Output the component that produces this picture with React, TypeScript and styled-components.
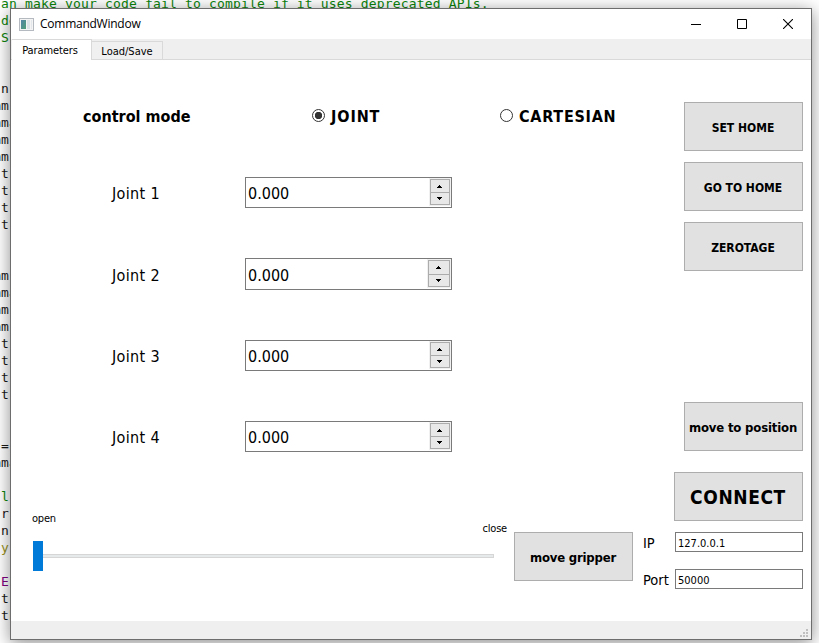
import React from 'react';
import styled, { createGlobalStyle } from 'styled-components';

const GlobalStyle = createGlobalStyle`
  * { box-sizing: border-box; }
  body { margin: 0; overflow: hidden; background: #fff; }
`;

const UI = '"DejaVu Sans Condensed", "DejaVu Sans", sans-serif';

const Desktop = styled.div`
  position: relative;
  width: 819px;
  height: 643px;
  overflow: hidden;
  background: #fff;
  font-family: ${UI};
  color: #000;
`;

const Code = styled.div`
  margin: -5px 0 0 -7px;
  font: 13px/17px "DejaVu Sans Mono", monospace;
  letter-spacing: 0.17px;
  white-space: pre;
`;

const CodeLine = styled.div<{ $color?: string }>`
  height: 17px;
  color: ${(p) => p.$color ?? '#1a1a1a'};
`;

const Window = styled.main`
  position: absolute;
  left: 10px;
  top: 8px;
  width: 802px;
  height: 632px;
  display: flex;
  flex-direction: column;
  background: #fff;
  border: 1px solid #6d6d6d;
  box-shadow: 0 3px 16px rgba(0, 0, 0, 0.45);
`;

const TitleBar = styled.header`
  display: flex;
  align-items: center;
  height: 30px;
  padding-left: 8px;
`;

const Title = styled.div`
  flex: 1;
  margin-left: 6px;
  font: 12px/16px "Open Sans", "Noto Sans", sans-serif;
  letter-spacing: -0.25px;
`;

const Caption = styled.button`
  display: flex;
  align-items: center;
  justify-content: center;
  width: 46px;
  height: 28px;
  padding: 0;
  border: 0;
  background: none;
`;

const TabBar = styled.nav`
  display: flex;
  align-items: flex-end;
  height: 21px;
  padding-left: 1px;
  background: #efefef;
  box-shadow: inset 0 -1px #d9d9d9;
`;

const Tab = styled.div<{ $active?: boolean; $width: number }>`
  width: ${(p) => p.$width}px;
  height: ${(p) => (p.$active ? 21 : 19)}px;
  padding-right: ${(p) => (p.$active ? 3 : 0)}px;
  border: 1px solid #d9d9d9;
  border-left-width: 0;
  border-bottom-width: ${(p) => (p.$active ? 0 : 1)}px;
  background: ${(p) => (p.$active ? '#fff' : '#f0f0f0')};
  text-align: center;
  font-size: 11px;
  line-height: ${(p) => (p.$active ? 21 : 19)}px;
  letter-spacing: ${(p) => (p.$active ? -0.1 : 0)}px;
  white-space: nowrap;
`;

const Panel = styled.section`
  display: grid;
  grid-template-columns: 632px 160px;
  height: 561px;
`;

const StatusBar = styled.footer`
  display: flex;
  justify-content: flex-end;
  align-items: flex-end;
  height: 18px;
  padding: 0 3px 2px 0;
  background: #efefef;
`;

const Form = styled.div`
  display: flex;
  flex-direction: column;
  padding-top: 42px;
`;

const ModeRow = styled.div`
  display: grid;
  grid-template-columns: 229px 188px 1fr;
  align-items: center;
  height: 27px;
  margin-bottom: 48px;
  padding-left: 72px;
  font-size: 16px;
  font-weight: bold;
  white-space: nowrap;
`;

const Radio = styled.label`
  display: flex;
  align-items: center;
  gap: 6px;
`;

const RadioMark = styled.span<{ $checked?: boolean }>`
  width: 13px;
  height: 13px;
  border: 1px solid #333;
  border-radius: 50%;
  background: ${(p) => (p.$checked ? 'radial-gradient(circle, #333 3.4px, #fff 4px)' : '#fff')};
`;

const Text = styled.span<{ $spacing?: number }>`
  padding-top: 2px;
  letter-spacing: ${(p) => p.$spacing ?? 0}px;
`;

const JointList = styled.div`
  display: flex;
  flex-direction: column;
  gap: 50px;
`;

const JointRow = styled.div<{ $height: number }>`
  display: grid;
  grid-template-columns: 133px 207px;
  align-items: center;
  height: ${(p) => p.$height}px;
  padding-left: 101px;
  font-size: 16px;
`;

const SpinBox = styled.div`
  display: flex;
  align-items: center;
  justify-content: space-between;
  height: 100%;
  padding: 0 1px 0 2px;
  border: 1px solid #7a7a7a;
`;

const Steppers = styled.div<{ $width: number }>`
  display: grid;
  grid-template-rows: 1fr 1fr;
  align-self: stretch;
  width: ${(p) => p.$width}px;
  margin: 1px 0 2px;
  border: 1px solid #acacac;
  outline: 1px solid #f0f0f0;
  background: #e8e8e8;
`;

const Step = styled.div`
  display: flex;
  align-items: center;
  justify-content: center;
  padding-right: 1px;
  & + & { border-top: 1px solid #acacac; }
`;

const GripperRow = styled.div`
  display: flex;
  align-items: flex-start;
  padding-left: 22px;
`;

const SliderBlock = styled.div`
  width: 474px;
  margin-right: 7px;
  padding-top: 60px;
`;

const SliderLabels = styled.div`
  display: flex;
  justify-content: space-between;
  align-items: flex-end;
  height: 24px;
  margin-left: -1px;
  font-size: 11px;
  line-height: 14px;
  letter-spacing: -0.2px;
`;

const OpenLabel = styled.span`
  align-self: flex-start;
`;

const Slider = styled.div`
  display: flex;
  align-items: center;
  width: 461px;
  height: 30px;
  margin-top: 5px;
`;

const Handle = styled.div`
  width: 10px;
  height: 30px;
  background: #007ad9;
`;

const Groove = styled.div`
  flex: 1;
  height: 4px;
  border: 1px solid #d6d6d6;
  border-left: 0;
  background: #e7eaea;
`;

const PushButton = styled.button<{ $width?: number; $top?: number; $size?: number; $spacing?: number; $drop?: number }>`
  flex: none;
  width: ${(p) => p.$width ?? 119}px;
  height: 49px;
  margin: ${(p) => p.$top ?? 0}px 0 0;
  padding: ${(p) => p.$drop ?? 2}px 1px 0 0;
  border: 1px solid #adadad;
  background: #e1e1e1;
  color: #000;
  font: bold ${(p) => p.$size ?? 13}px ${UI};
  letter-spacing: ${(p) => p.$spacing ?? 0}px;
  white-space: nowrap;
`;

const Actions = styled.aside`
  display: flex;
  flex-direction: column;
  align-items: flex-end;
  padding-top: 42px;
`;

const Field = styled.div<{ $top: number }>`
  display: grid;
  grid-template-columns: 32px 128px;
  align-items: center;
  height: 20px;
  margin-top: ${(p) => p.$top}px;
  font-size: 14.5px;
`;

const FieldName = styled.span`
  padding-top: 1px;
`;

const Input = styled.div`
  height: 20px;
  padding: 3px 0 0 2px;
  border: 1px solid #7a7a7a;
  font-size: 11px;
  line-height: 16px;
`;

const codeLines: [string, string?][] = [
  [' an make your code fail to compile if it uses deprecated APIs.', '#0b840b'],
  [' de', '#0b840b'], [' S', '#0b840b'], [''], [''],
  [' n'], ['mm'], ['mma'], ['mm'], ['mm'], [' t'], [' t'], [' t'], [' t'],
  [''], [''], ['mm'], ['mma'], ['mm'], ['mm'], [' t'], [' t'], [' t'], [' t'],
  [''], [''], [' ='], ['mma'], [''], [' l', '#0b840b'], [' r'], [' n'], [' y', '#97911c'],
  [''], [' E', '#800080'], [' t'], [' th'],
];

const joints = [
  { name: 'Joint 1', height: 31, stepper: 20 },
  { name: 'Joint 2', height: 32, stepper: 22 },
  { name: 'Joint 3', height: 31, stepper: 20 },
  { name: 'Joint 4', height: 31, stepper: 20 },
];

const AppIcon = () => (
  <svg width="15" height="13" viewBox="0 0 15 13" shapeRendering="crispEdges">
    <defs>
      <linearGradient id="pane" x1="0" y1="0" x2="1" y2="1">
        <stop offset="0" stopColor="#5483a8" />
        <stop offset="1" stopColor="#4fa076" />
      </linearGradient>
    </defs>
    <rect x="0.5" y="0.5" width="14" height="12" fill="#f4f4f4" stroke="#b5bac0" />
    <rect x="2" y="2" width="5" height="9" fill="url(#pane)" />
    <rect x="8" y="2" width="3" height="9" fill="#dce2e6" />
    <rect x="12" y="2" width="1" height="9" fill="#e4e7ea" />
  </svg>
);

const Arrow = ({ down }: { down?: boolean }) => (
  <svg width="5" height="3" viewBox="0 0 5 3" shapeRendering="crispEdges">
    <path d={down ? 'M0 0h5v1H0zM1 1h3v1H1zM2 2h1v1H2z' : 'M2 0h1v1H2zM1 1h3v1H1zM0 2h5v1H0z'} />
  </svg>
);

export default function App() {
  return (
    <Desktop>
      <GlobalStyle />
      <Code>
        {codeLines.map(([text, color], i) => (
          <CodeLine key={i} $color={color}>{text}</CodeLine>
        ))}
      </Code>
      <Window>
        <TitleBar>
          <AppIcon />
          <Title>CommandWindow</Title>
          <Caption aria-label="Minimize">
            <svg width="10" height="10"><path d="M0 5.5h10" stroke="#000" /></svg>
          </Caption>
          <Caption aria-label="Maximize">
            <svg width="10" height="10"><path d="M.5.5h9v9h-9z" fill="none" stroke="#000" /></svg>
          </Caption>
          <Caption aria-label="Close">
            <svg width="10" height="10"><path d="M0 0L10 10M10 0L0 10" stroke="#000" strokeWidth="1.1" /></svg>
          </Caption>
        </TitleBar>
        <TabBar>
          <Tab $active $width={80}>Parameters</Tab>
          <Tab $width={71}>Load/Save</Tab>
        </TabBar>
        <Panel>
          <Form>
            <ModeRow>
              <Text>control mode</Text>
              <Radio><RadioMark $checked /><Text $spacing={0.9}>JOINT</Text></Radio>
              <Radio><RadioMark /><Text $spacing={0.75}>CARTESIAN</Text></Radio>
            </ModeRow>
            <JointList>
              {joints.map((j) => (
                <JointRow key={j.name} $height={j.height}>
                  <Text $spacing={0.35}>{j.name}</Text>
                  <SpinBox>
                    <Text>0.000</Text>
                    <Steppers $width={j.stepper}>
                      <Step><Arrow /></Step>
                      <Step><Arrow down /></Step>
                    </Steppers>
                  </SpinBox>
                </JointRow>
              ))}
            </JointList>
            <GripperRow>
              <SliderBlock>
                <SliderLabels>
                  <OpenLabel>open</OpenLabel>
                  <span>close</span>
                </SliderLabels>
                <Slider><Handle /><Groove /></Slider>
              </SliderBlock>
              <PushButton $top={80} $spacing={-0.2}>move gripper</PushButton>
            </GripperRow>
          </Form>
          <Actions>
            <PushButton $size={12}>SET HOME</PushButton>
            <PushButton $size={12} $top={11}>GO TO HOME</PushButton>
            <PushButton $size={12} $top={11}>ZEROTAGE</PushButton>
            <PushButton $top={131} $spacing={-0.17}>move to position</PushButton>
            <PushButton $width={129} $top={21} $size={19} $spacing={0.6} $drop={0}>CONNECT</PushButton>
            <Field $top={11}><FieldName>IP</FieldName><Input>127.0.0.1</Input></Field>
            <Field $top={17}><FieldName>Port</FieldName><Input>50000</Input></Field>
          </Actions>
        </Panel>
        <StatusBar>
          <svg width="8" height="8" fill="#bfbfbf" shapeRendering="crispEdges">
            <path d="M6 0h2v2H6zM3 3h2v2H3zM6 3h2v2H6zM0 6h2v2H0zM3 6h2v2H3zM6 6h2v2H6z" />
          </svg>
        </StatusBar>
      </Window>
    </Desktop>
  );
}
